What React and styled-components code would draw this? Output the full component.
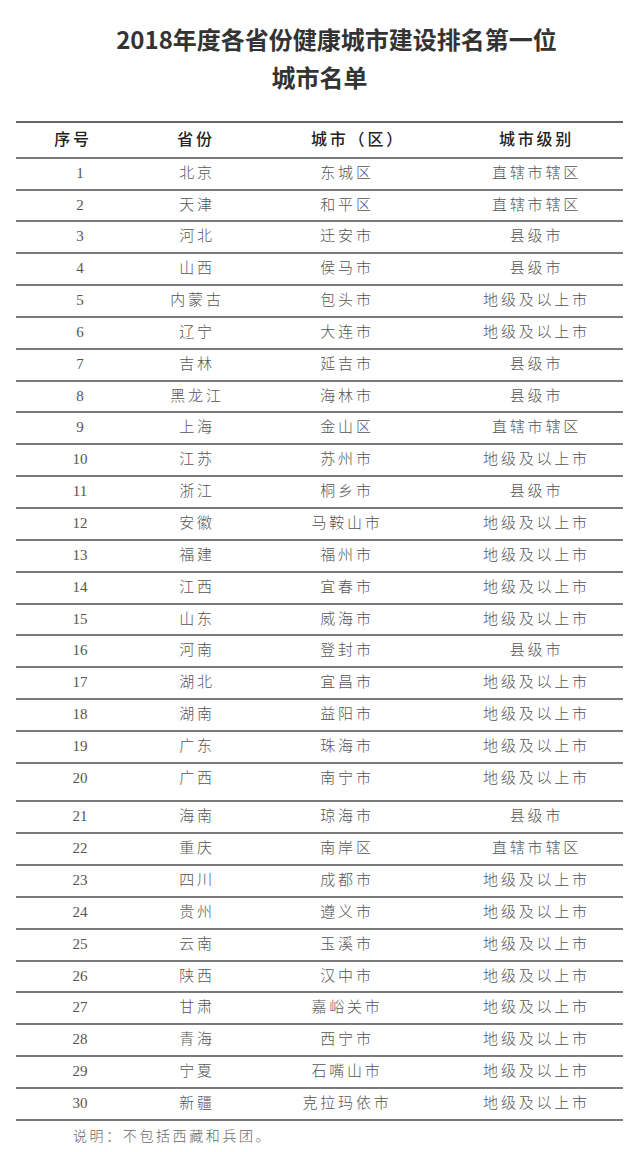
import styled, { createGlobalStyle } from "styled-components";

const GlobalStyle = createGlobalStyle`
  html, body {
    margin: 0;
    padding: 0;
    background: #fff;
  }
  body {
    font-family: "Liberation Serif", "Noto Sans CJK SC", serif;
    color: #555;
  }
`;

const rows = [
  ["1", "北京", "东城区", "直辖市辖区"],
  ["2", "天津", "和平区", "直辖市辖区"],
  ["3", "河北", "迁安市", "县级市"],
  ["4", "山西", "侯马市", "县级市"],
  ["5", "内蒙古", "包头市", "地级及以上市"],
  ["6", "辽宁", "大连市", "地级及以上市"],
  ["7", "吉林", "延吉市", "县级市"],
  ["8", "黑龙江", "海林市", "县级市"],
  ["9", "上海", "金山区", "直辖市辖区"],
  ["10", "江苏", "苏州市", "地级及以上市"],
  ["11", "浙江", "桐乡市", "县级市"],
  ["12", "安徽", "马鞍山市", "地级及以上市"],
  ["13", "福建", "福州市", "地级及以上市"],
  ["14", "江西", "宜春市", "地级及以上市"],
  ["15", "山东", "威海市", "地级及以上市"],
  ["16", "河南", "登封市", "县级市"],
  ["17", "湖北", "宜昌市", "地级及以上市"],
  ["18", "湖南", "益阳市", "地级及以上市"],
  ["19", "广东", "珠海市", "地级及以上市"],
  ["20", "广西", "南宁市", "地级及以上市"],
  ["21", "海南", "琼海市", "县级市"],
  ["22", "重庆", "南岸区", "直辖市辖区"],
  ["23", "四川", "成都市", "地级及以上市"],
  ["24", "贵州", "遵义市", "地级及以上市"],
  ["25", "云南", "玉溪市", "地级及以上市"],
  ["26", "陕西", "汉中市", "地级及以上市"],
  ["27", "甘肃", "嘉峪关市", "地级及以上市"],
  ["28", "青海", "西宁市", "地级及以上市"],
  ["29", "宁夏", "石嘴山市", "地级及以上市"],
  ["30", "新疆", "克拉玛依市", "地级及以上市"],
];

const Page = styled.div`
  width: 640px;
  min-height: 1152px;
  padding: 20px 17px 0 16px;
  box-sizing: border-box;
`;

const Title = styled.h1`
  margin: 0;
  font-family: "Noto Sans CJK SC", "Liberation Sans", sans-serif;
  font-weight: 700;
  font-size: 24px;
  line-height: 38px;
  color: #333;
  text-align: center;
  padding-left: ${(p) => p.$shift || 0}px;
`;

const Table = styled.div`
  margin-top: 25px;
  border-top: 2px solid #666;
`;

const Row = styled.div`
  display: grid;
  grid-template-columns: 128px 104px 196px 1fr;
  align-items: start;
  height: ${(p) => p.$height}px;
  box-sizing: border-box;
  border-bottom: 2px solid #7a7a7a;
`;

const Cell = styled.div`
  text-align: center;
  margin-left: ${(p) => p.$dx || 0}px;
  margin-right: ${(p) => -(p.$dx || 0)}px;
  padding-top: ${(p) => p.$top}px;
  font-family: "Liberation Serif", "Noto Sans CJK SC", serif;
  font-size: ${(p) => (p.$head ? 16 : 15)}px;
  font-weight: ${(p) => (p.$head ? 500 : 300)};
  line-height: 20px;
  letter-spacing: ${(p) => (p.$num ? 0 : 2.8)}px;
  color: ${(p) => (p.$head ? "#222" : "#555")};
  white-space: nowrap;
`;

const Note = styled.p`
  margin: 3px 0 0 57px;
  font-family: "Noto Sans CJK SC", serif;
  font-weight: 300;
  font-size: 14px;
  letter-spacing: 2.6px;
  line-height: 22px;
  color: #666;
`;

const headShift = [-7, 0, 12, 3];
const bodyShift = [0, 1, 1, 3];

export default function App() {
  return (
    <>
      <GlobalStyle />
      <Page>
        <Title $shift={34}>2018年度各省份健康城市建设排名第一位</Title>
        <Title>城市名单</Title>
        <Table>
          <Row $height={35.7}>
            {["序号", "省份", "城市（区）", "城市级别"].map((h, i) => (
              <Cell key={h} $head $top={7} $dx={headShift[i]}>
                {h}
              </Cell>
            ))}
          </Row>
          {rows.map((r) => (
            <Row key={r[0]} $height={r[0] === "20" ? 38.6 : 31.85}>
              {r.map((c, i) => (
                <Cell key={i} $num={i === 0} $top={4} $dx={bodyShift[i]}>
                  {c}
                </Cell>
              ))}
            </Row>
          ))}
        </Table>
        <Note>说明：不包括西藏和兵团。</Note>
      </Page>
    </>
  );
}
